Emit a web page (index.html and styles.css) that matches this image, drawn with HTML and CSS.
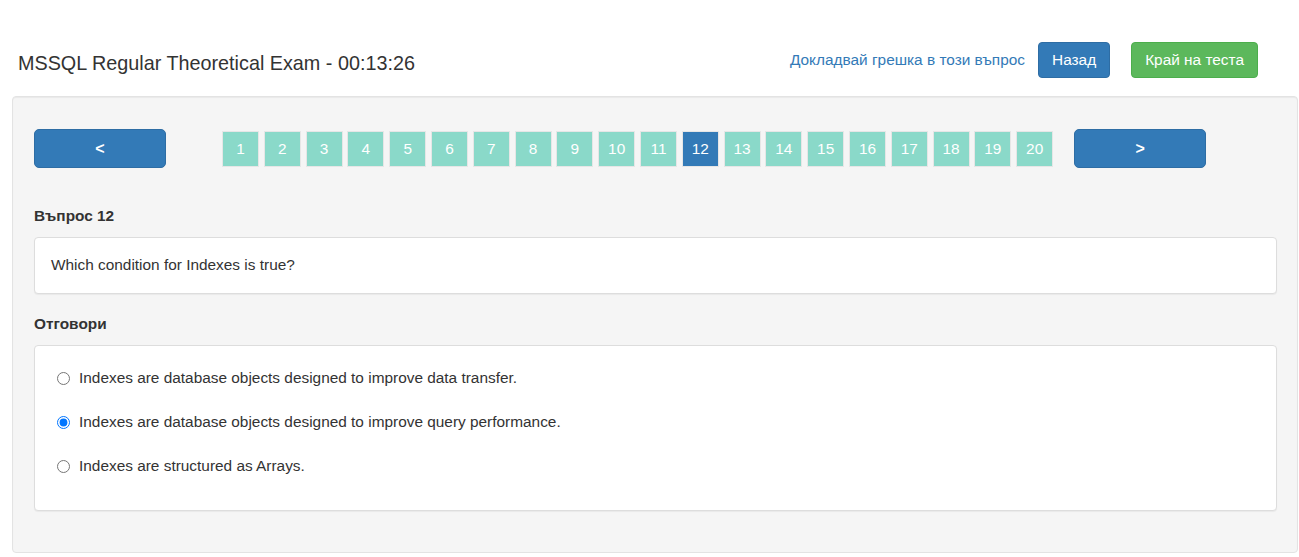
FILE: index.html
```html
<!DOCTYPE html>
<html>
<head>
<meta charset="utf-8">
<link rel="stylesheet" href="styles.css">
</head>
<body>
<header class="top">
  <h1 class="title">MSSQL Regular Theoretical Exam - 00:13:26</h1>
  <div class="actions">
    <a class="report" href="#">Докладвай грешка в този въпрос</a>
    <a class="btn btn-primary back" href="#">Назад</a>
    <a class="btn btn-success finish" href="#">Край на теста</a>
  </div>
</header>
<main class="well">
  <nav class="pager">
    <a class="nav-btn" href="#">&lt;</a>
    <ul class="pages">
      <li>1</li><li>2</li><li>3</li><li>4</li><li>5</li><li>6</li><li>7</li><li>8</li><li>9</li><li>10</li>
      <li>11</li><li class="active">12</li><li>13</li><li>14</li><li>15</li><li>16</li><li>17</li><li>18</li><li>19</li><li>20</li>
    </ul>
    <a class="nav-btn next" href="#">&gt;</a>
  </nav>
  <h4 class="label first">Въпрос 12</h4>
  <div class="panel question">Which condition for Indexes is true?</div>
  <h4 class="label">Отговори</h4>
  <div class="panel answers">
    <label class="answer"><input type="radio" name="a"> Indexes are database objects designed to improve data transfer.</label>
    <label class="answer"><input type="radio" name="a" checked> Indexes are database objects designed to improve query performance.</label>
    <label class="answer"><input type="radio" name="a"> Indexes are structured as Arrays.</label>
  </div>
</main>
</body>
</html>
```
FILE: styles.css
```css
* { box-sizing: border-box; }
html, body { margin: 0; padding: 0; background: #fff; }
body {
  font-family: "Liberation Sans", Arial, Helvetica, sans-serif;
  font-size: 15.4px;
  line-height: 22px;
  color: #333;
}
.top {
  height: 96px;
  display: flex;
  align-items: center;
  justify-content: space-between;
  padding: 0 41px 0 18px;
}
.title {
  margin: 31px 0 0;
  font-size: 19.8px;
  font-weight: normal;
  line-height: 1.1;
}
.actions {
  display: flex;
  align-items: center;
  margin-top: 24px;
}
.report {
  color: #337ab7;
  text-decoration: none;
  margin-right: 13px;
}
.btn {
  display: inline-block;
  height: 36px;
  padding: 6px 13px;
  line-height: 22px;
  border-radius: 4px;
  color: #fff;
  text-decoration: none;
  border: 1px solid transparent;
}
.btn-primary { background: #337ab7; border-color: #2e6da4; }
.btn-success { background: #5cb85c; border-color: #4cae4c; margin-left: 21px; }
.well {
  margin: 0 1px 0 12px;
  background: #f5f5f5;
  border: 1px solid #e3e3e3;
  border-radius: 4px;
  box-shadow: inset 0 1px 1px rgba(0,0,0,.05);
  padding: 32px 20px 41px 21px;
}
.pager {
  display: flex;
  align-items: center;
  height: 39px;
}
.nav-btn {
  width: 132px;
  height: 39px;
  background: #337ab7;
  border: 1px solid #2e6da4;
  border-radius: 5px;
  color: #fff;
  font-weight: bold;
  font-size: 16px;
  text-decoration: none;
  display: flex;
  align-items: center;
  justify-content: center;
}
.pages {
  list-style: none;
  margin: 0 0 0 56px;
  padding: 0;
  display: flex;
  gap: 4.8px;
}
.pages li {
  width: 37px;
  height: 36px;
  background: #8ad9c9;
  border: 1px solid #e6e6e6;
  color: #fff;
  font-size: 15.4px;
  display: flex;
  align-items: center;
  justify-content: center;
}
.pages li.active { background: #337ab7; }
.next { margin-left: 21px; }
.label {
  margin: 19px 0 10px;
  font-size: 15.4px;
  font-weight: bold;
  line-height: 22px;
}
.label.first { margin-top: 37px; }
.panel {
  background: #fff;
  border: 1px solid #ddd;
  border-radius: 4px;
  box-shadow: 0 1px 1px rgba(0,0,0,.05);
}
.question {
  padding: 16px 16px 0;
  height: 57px;
}
.answers {
  padding: 21px 22px 0;
  height: 166px;
}
.answer {
  display: flex;
  align-items: center;
  height: 22px;
  margin-bottom: 22px;
}
.answer:last-child { margin-bottom: 0; }
.answer input {
  margin: 0 9px 0 0;
  width: 13px;
  height: 13px;
}
```
